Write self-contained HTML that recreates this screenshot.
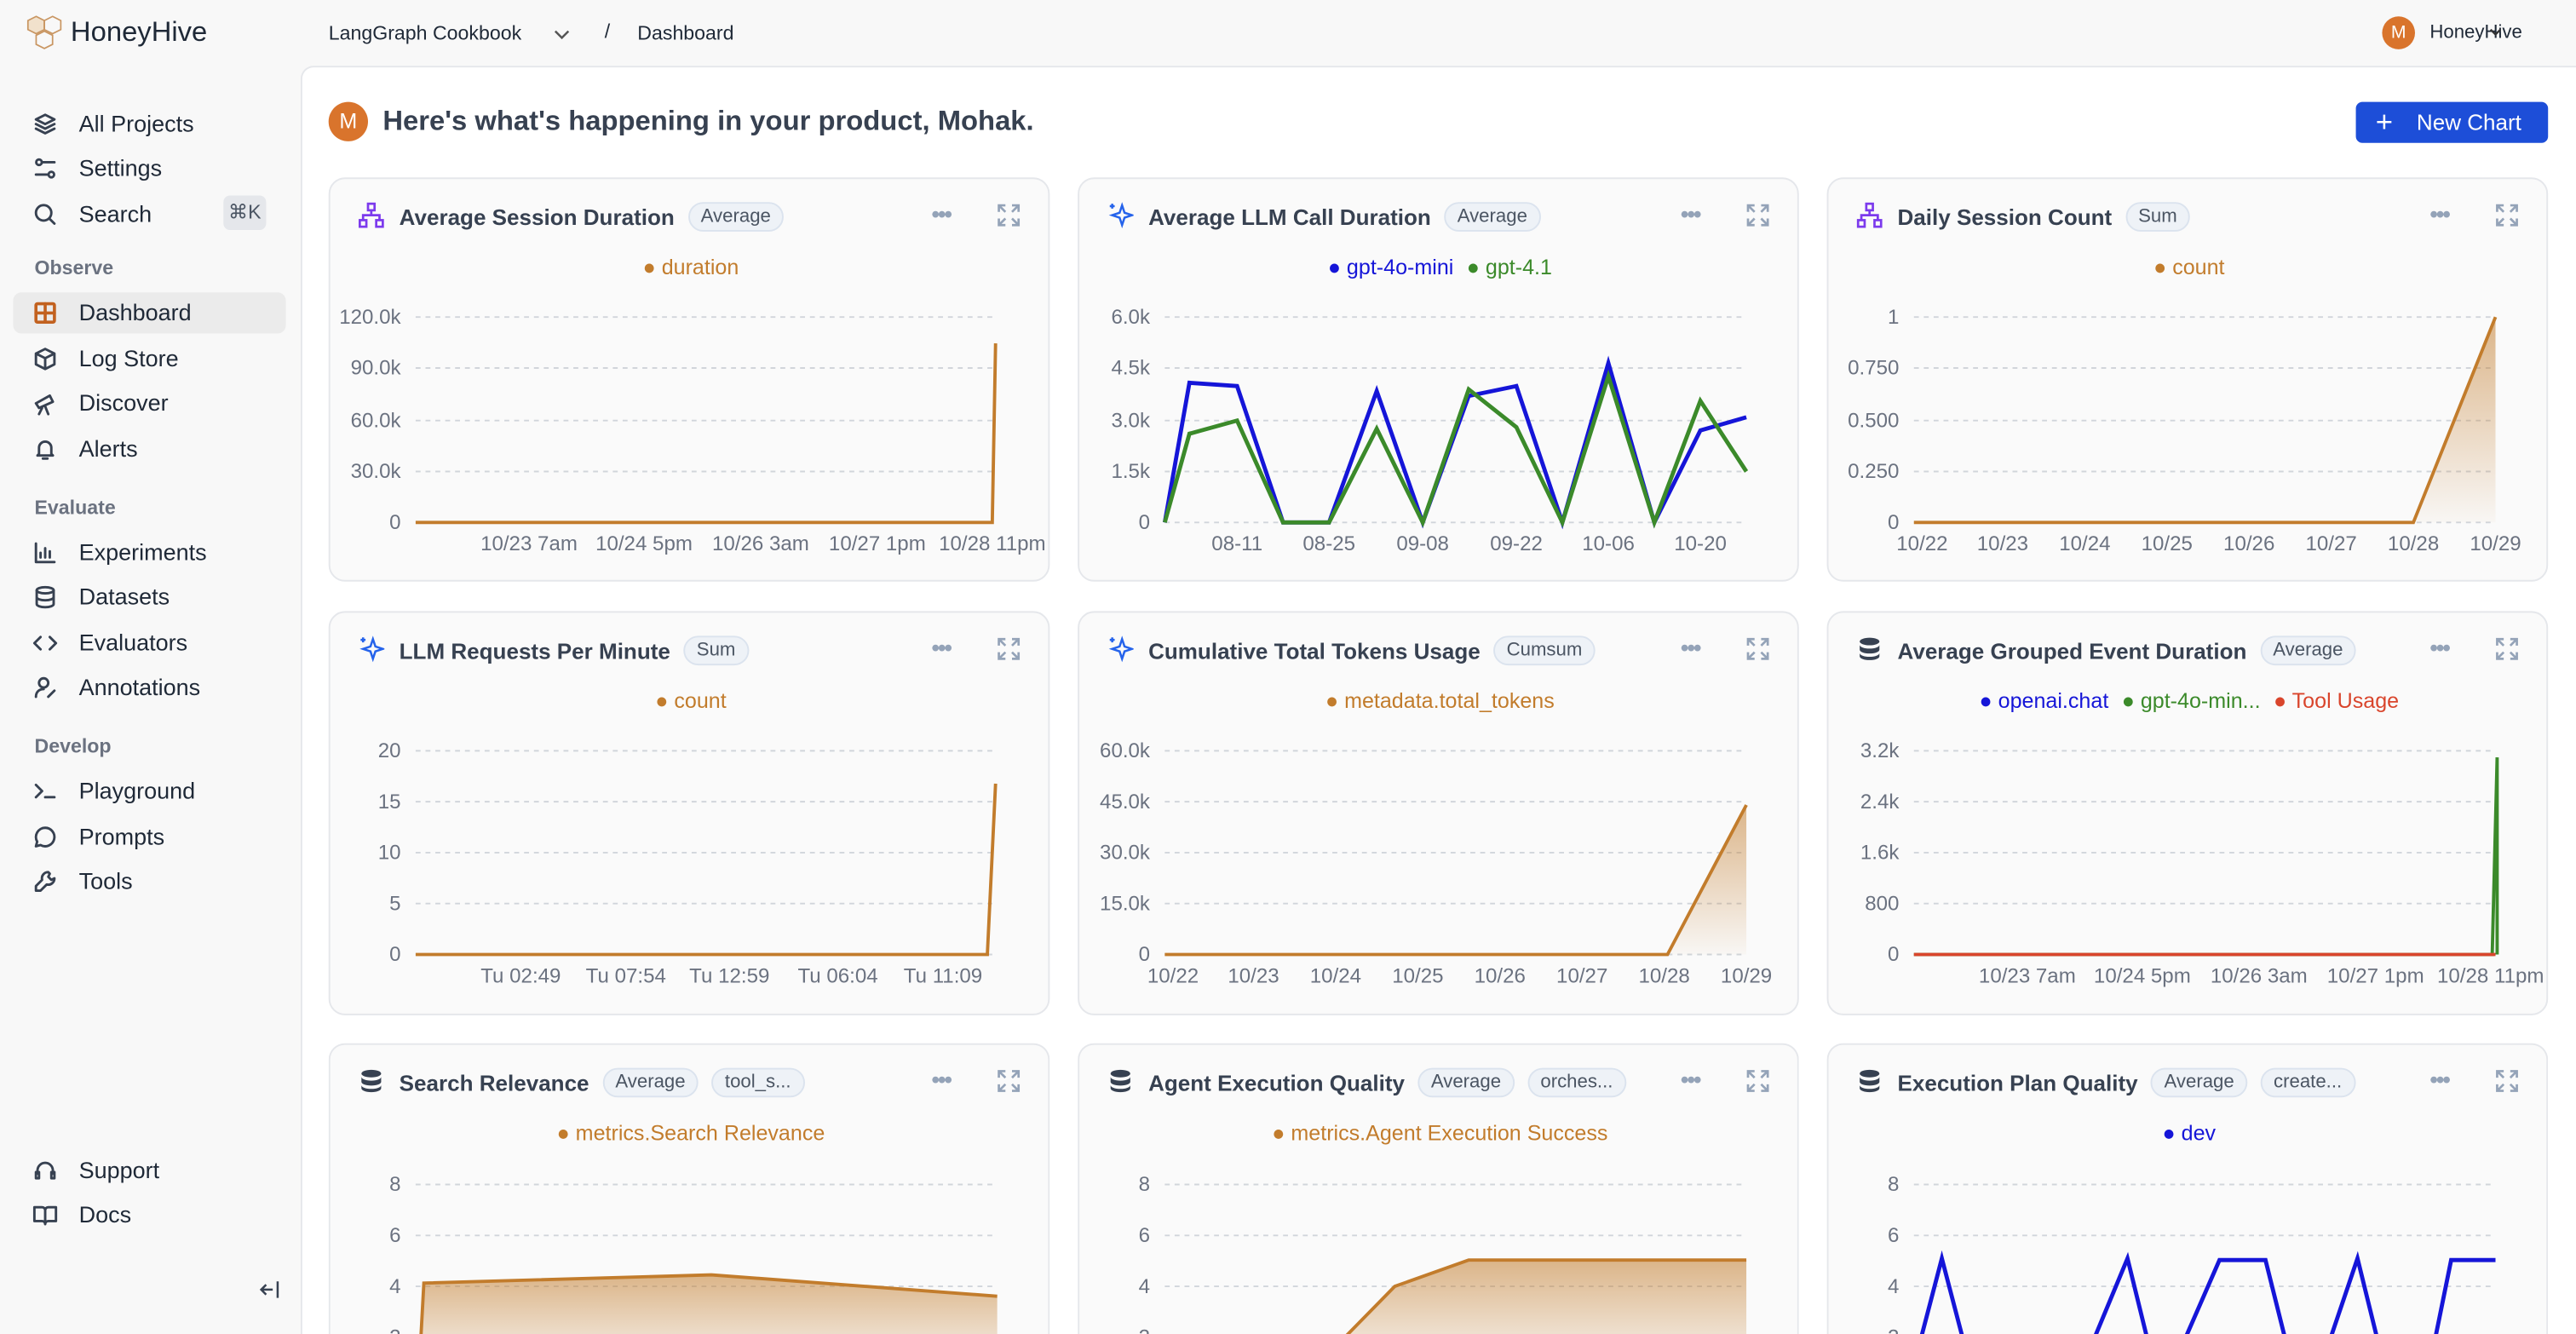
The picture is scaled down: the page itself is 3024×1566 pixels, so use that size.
<!DOCTYPE html>
<html><head><meta charset="utf-8"><style>
*{box-sizing:border-box;margin:0;padding:0}
html,body{width:3024px;height:1566px;overflow:hidden;background:#f8f8f8}
#w{position:absolute;left:0;top:0;width:1568px;height:812px;overflow:hidden;transform:scale(1.92857,1.92857);transform-origin:0 0;font-family:"Liberation Sans",sans-serif;color:#1f2937;background:#f8f8f8}
.a{position:absolute;white-space:nowrap}
.nav{position:absolute;left:20px;font-size:14px;color:#1f2937;display:flex;align-items:center}
.nav svg{width:15px;height:15px;margin-right:13px;fill:none;stroke:#374151;stroke-width:1.6;stroke-linecap:round;stroke-linejoin:round}
.sec{position:absolute;left:21px;font-size:12px;color:#6b7280;font-weight:bold}
#main{position:absolute;left:183px;top:40px;width:1385px;height:772px;background:#fff;border-left:1px solid #e5e7eb;border-top:1px solid #e5e7eb;border-top-left-radius:8px}
.card{position:absolute;width:439px;height:246px;background:#fafafa;border:1px solid #e5e7eb;border-radius:10px;overflow:hidden}
.card.r3{height:177px;border-bottom:none;border-bottom-left-radius:0;border-bottom-right-radius:0}
.card .t{position:absolute;left:42px;top:14px;font-size:13.5px;font-weight:bold;color:#374151;display:flex;align-items:center}
.pill{margin-left:8px;font-size:11.5px;font-weight:normal;color:#4b5563;background:#eef2f7;border:1px solid #dbe3ee;border-radius:9px;padding:2px 7px}
.ic{position:absolute;left:17px;top:14px;width:16px;height:16px}
.dots{position:absolute;left:366px;top:13px;font-size:14px;color:#94a3b8;letter-spacing:-1px;font-weight:bold}
.ex{position:absolute;left:405px;top:14px;width:16px;height:16px}
.card svg.c{position:absolute;left:0;top:0;width:439px;height:246px}
.c text{font-family:"Liberation Sans",sans-serif;font-size:12.5px;fill:#6b7280}
.c .g{stroke:#d1d5db;stroke-dasharray:3 3;stroke-width:1}
.lg{position:absolute;left:0;width:439px;top:46px;text-align:center;font-size:13px}
.lg span{margin:0 4px}
</style></head><body><div id="w">

<svg class="a" style="left:15px;top:9px" width="26" height="26" viewBox="0 0 26 26" fill="none" stroke="#c99662" stroke-width="0.9"><polygon points="7,1 12,3.5 12,9 7,11.5 2,9 2,3.5" fill="#f1e1cc"/><polygon points="17,1 22,3.5 22,9 17,11.5 12,9 12,3.5"/><polygon points="12,10 17,12.5 17,18 12,20.5 7,18 7,12.5"/></svg>
<div class="a" style="left:43px;top:10px;font-size:17px;color:#1f2937">HoneyHive</div>
<div class="a" style="left:200px;top:13px;font-size:12px;color:#1f2937">LangGraph Cookbook</div>
<svg class="a" style="left:336px;top:16px" width="12" height="10" viewBox="0 0 12 10"><path d="M2 3l4 4 4-4" stroke="#555" fill="none" stroke-width="1.3"/></svg>
<div class="a" style="left:368px;top:12px;font-size:12px;color:#1f2937">/</div>
<div class="a" style="left:388px;top:13px;font-size:12px;color:#1f2937">Dashboard</div>
<div class="a" style="left:1450px;top:10px;width:20px;height:20px;border-radius:50%;background:#d9742c;color:#fff;font-size:11px;text-align:center;line-height:20px">M</div>
<div class="a" style="left:1479px;top:14px;font-size:11.5px;color:#1f2937">HoneyHive</div>
<svg class="a" style="left:1514px;top:16px" width="10" height="8" viewBox="0 0 10 8"><path d="M2 2l3 3 3-3" stroke="#333" fill="none" stroke-width="1.2"/></svg>

<div class="nav" style="top:67px"><svg viewBox="0 0 16 16"><path d="M8 2l6 3-6 3-6-3z M2 8l6 3 6-3 M2 11l6 3 6-3"/></svg>All Projects</div>
<div class="nav" style="top:94px"><svg viewBox="0 0 16 16"><circle cx="4" cy="4" r="1.8"/><path d="M6 4h8 M2 12h8"/><circle cx="12" cy="12" r="1.8"/></svg>Settings</div>
<div class="nav" style="top:122px"><svg viewBox="0 0 16 16"><circle cx="7" cy="7" r="5"/><path d="M11 11l3 3"/></svg>Search</div>
<div class="a" style="left:136px;top:119px;width:26px;height:21px;background:#e5e7eb;border-radius:4px;font-size:12px;color:#4b5563;text-align:center;line-height:21px">⌘K</div>
<div class="sec" style="top:156px">Observe</div>
<div class="a" style="left:8px;top:178px;width:166px;height:25px;background:#ebebeb;border-radius:5px"></div>
<div class="nav" style="top:182px"><svg viewBox="0 0 16 16" style="stroke:#c2611f;stroke-width:2"><rect x="2" y="2" width="12" height="12" rx="1"/><path d="M8 2v12M2 8h12"/></svg>Dashboard</div>
<div class="nav" style="top:210px"><svg viewBox="0 0 16 16"><path d="M8 1.5l6 3v7l-6 3-6-3v-7z M2 4.5l6 3 6-3 M8 7.5v7"/></svg>Log Store</div>
<div class="nav" style="top:237px"><svg viewBox="0 0 16 16"><path d="M2 8l9-5 2 4-9 4z M6 11l-2 4 M8 10l2 5"/></svg>Discover</div>
<div class="nav" style="top:265px"><svg viewBox="0 0 16 16"><path d="M4 11V7a4 4 0 018 0v4l1 1H3z M6.5 14h3"/></svg>Alerts</div>
<div class="sec" style="top:302px">Evaluate</div>
<div class="nav" style="top:328px"><svg viewBox="0 0 16 16"><path d="M2 2v12h12 M5 11V8 M8 11V5 M11 11V7"/></svg>Experiments</div>
<div class="nav" style="top:355px"><svg viewBox="0 0 16 16"><ellipse cx="8" cy="3.5" rx="5.5" ry="2"/><path d="M2.5 3.5v9c0 1.1 2.5 2 5.5 2s5.5-.9 5.5-2v-9 M2.5 8c0 1.1 2.5 2 5.5 2s5.5-.9 5.5-2"/></svg>Datasets</div>
<div class="nav" style="top:383px"><svg viewBox="0 0 16 16"><path d="M5 4L1 8l4 4 M11 4l4 4-4 4"/></svg>Evaluators</div>
<div class="nav" style="top:410px"><svg viewBox="0 0 16 16"><circle cx="7" cy="5" r="3"/><path d="M2 14c0-3 2-5 5-5 M10 14l4-4"/></svg>Annotations</div>
<div class="sec" style="top:447px">Develop</div>
<div class="nav" style="top:473px"><svg viewBox="0 0 16 16"><path d="M2 4l4 4-4 4 M8 12h6"/></svg>Playground</div>
<div class="nav" style="top:501px"><svg viewBox="0 0 16 16"><path d="M8 2a6 6 0 00-5.2 9L2 14l3-.8A6 6 0 108 2z"/></svg>Prompts</div>
<div class="nav" style="top:528px"><svg viewBox="0 0 16 16"><path d="M10 2a4 4 0 00-4 5L2 11v3h3l4-4a4 4 0 005-4l-2 1-2-2 1-2z"/></svg>Tools</div>
<div class="nav" style="top:704px"><svg viewBox="0 0 16 16"><path d="M3 10V8a5 5 0 0110 0v2 M2 9h2v4H2z M12 9h2v4h-2z"/></svg>Support</div>
<div class="nav" style="top:731px"><svg viewBox="0 0 16 16"><path d="M1 3h5a2 2 0 012 2v9a2 2 0 00-2-2H1z M15 3h-5a2 2 0 00-2 2v9a2 2 0 012-2h5z"/></svg>Docs</div>
<svg class="a" style="left:157px;top:779px" width="14" height="12" viewBox="0 0 14 12"><path d="M12 1v10 M9 6H2 M5 3L2 6l3 3" stroke="#374151" fill="none" stroke-width="1.3"/></svg>

<div id="main"></div>
<div class="a" style="left:200px;top:62px;width:24px;height:24px;border-radius:50%;background:#d9742c;color:#fff;font-size:13px;text-align:center;line-height:24px">M</div>
<div class="a" style="left:233px;top:64px;font-size:17px;font-weight:bold;color:#374151">Here's what's happening in your product, Mohak.</div>
<div class="a" style="left:1434px;top:62px;width:117px;height:25px;background:#1d4ed8;border-radius:4px;color:#fff;font-size:13.5px;line-height:25px;padding-left:37px">New Chart</div>
<div class="a" style="left:1446px;top:62px;color:#fff;font-size:18px;line-height:25px">+</div>

<div class="card" style="left:200px;top:108px">
<svg class="ic" viewBox="0 0 16 16" fill="none" stroke="#7c3aed" stroke-width="1.4"><rect x="6" y="1" width="4" height="4"/><rect x="1" y="11" width="4" height="4"/><rect x="11" y="11" width="4" height="4"/><path d="M8 5v3M3 11V8h10v3"/></svg>
<div class="t">Average Session Duration<span class="pill">Average</span></div>
<div class="dots">•••</div><svg class="ex" viewBox="0 0 16 16" fill="none" stroke="#94a3b8" stroke-width="1.4"><path d="M2 6V2h4M2 2l4 4M10 2h4v4M14 2l-4 4M2 10v4h4M2 14l4-4M14 10v4h-4M14 14l-4-4"/></svg>
<div class="lg"><span style="color:#c27c2c">● duration</span></div>
<svg class="c"><g class="g"><line x1="52" y1="84" x2="406" y2="84"/><line x1="52" y1="115" x2="406" y2="115"/><line x1="52" y1="147" x2="406" y2="147"/><line x1="52" y1="178" x2="406" y2="178"/><line x1="52" y1="209" x2="406" y2="209"/></g>
<g text-anchor="end"><text x="43" y="88">120.0k</text><text x="43" y="119">90.0k</text><text x="43" y="151">60.0k</text><text x="43" y="182">30.0k</text><text x="43" y="213">0</text></g>
<polyline points="52,209 403,209 405,100" fill="none" stroke="#c27c2c" stroke-width="2"/>
<g text-anchor="middle"><text x="121" y="226">10/23 7am</text><text x="191" y="226">10/24 5pm</text><text x="262" y="226">10/26 3am</text><text x="333" y="226">10/27 1pm</text><text x="403" y="226">10/28 11pm</text></g></svg></div>

<div class="card" style="left:656px;top:108px">
<svg class="ic" viewBox="0 0 16 16" fill="none" stroke="#2563eb" stroke-width="1.3"><path d="M9 2l1.5 4.5L15 8l-4.5 1.5L9 14l-1.5-4.5L3 8l4.5-1.5z M3 1v3M1.5 2.5h3"/></svg>
<div class="t">Average LLM Call Duration<span class="pill">Average</span></div>
<div class="dots">•••</div><svg class="ex" viewBox="0 0 16 16" fill="none" stroke="#94a3b8" stroke-width="1.4"><path d="M2 6V2h4M2 2l4 4M10 2h4v4M14 2l-4 4M2 10v4h4M2 14l4-4M14 10v4h-4M14 14l-4-4"/></svg>
<div class="lg"><span style="color:#1515d8">● gpt-4o-mini</span><span style="color:#3b8a2a">● gpt-4.1</span></div>
<svg class="c"><g class="g"><line x1="52" y1="84" x2="406" y2="84"/><line x1="52" y1="115" x2="406" y2="115"/><line x1="52" y1="147" x2="406" y2="147"/><line x1="52" y1="178" x2="406" y2="178"/><line x1="52" y1="209" x2="406" y2="209"/></g>
<g text-anchor="end"><text x="43" y="88">6.0k</text><text x="43" y="119">4.5k</text><text x="43" y="151">3.0k</text><text x="43" y="182">1.5k</text><text x="43" y="213">0</text></g>
<polyline points="52,209 67,124 96,126 124,209 152,209 181,129 209,209 237,132 266,126 294,209 322,112 350,209 378,153 406,145" fill="none" stroke="#1515d8" stroke-width="2.5"/>
<polyline points="52,209 67,155 96,147 124,209 152,209 181,152 209,209 237,128 266,151 294,209 322,120 350,209 378,135 406,178" fill="none" stroke="#3b8a2a" stroke-width="2.5"/>
<g text-anchor="middle"><text x="96" y="226">08-11</text><text x="152" y="226">08-25</text><text x="209" y="226">09-08</text><text x="266" y="226">09-22</text><text x="322" y="226">10-06</text><text x="378" y="226">10-20</text></g></svg></div>

<div class="card" style="left:1112px;top:108px">
<svg class="ic" viewBox="0 0 16 16" fill="none" stroke="#7c3aed" stroke-width="1.4"><rect x="6" y="1" width="4" height="4"/><rect x="1" y="11" width="4" height="4"/><rect x="11" y="11" width="4" height="4"/><path d="M8 5v3M3 11V8h10v3"/></svg>
<div class="t">Daily Session Count<span class="pill">Sum</span></div>
<div class="dots">•••</div><svg class="ex" viewBox="0 0 16 16" fill="none" stroke="#94a3b8" stroke-width="1.4"><path d="M2 6V2h4M2 2l4 4M10 2h4v4M14 2l-4 4M2 10v4h4M2 14l4-4M14 10v4h-4M14 14l-4-4"/></svg>
<div class="lg"><span style="color:#c27c2c">● count</span></div>
<svg class="c"><defs><linearGradient id="gr" x1="0" y1="0" x2="0" y2="1"><stop offset="0" stop-color="#c27c2c" stop-opacity=".55"/><stop offset="1" stop-color="#c27c2c" stop-opacity=".03"/></linearGradient></defs><g class="g"><line x1="52" y1="84" x2="406" y2="84"/><line x1="52" y1="115" x2="406" y2="115"/><line x1="52" y1="147" x2="406" y2="147"/><line x1="52" y1="178" x2="406" y2="178"/><line x1="52" y1="209" x2="406" y2="209"/></g>
<g text-anchor="end"><text x="43" y="88">1</text><text x="43" y="119">0.750</text><text x="43" y="151">0.500</text><text x="43" y="182">0.250</text><text x="43" y="213">0</text></g>
<polygon points="356,209 406,84 406,209" fill="url(#gr)"/>
<polyline points="52,209 356,209 406,84" fill="none" stroke="#c27c2c" stroke-width="2"/>
<g text-anchor="middle"><text x="57" y="226">10/22</text><text x="106" y="226">10/23</text><text x="156" y="226">10/24</text><text x="206" y="226">10/25</text><text x="256" y="226">10/26</text><text x="306" y="226">10/27</text><text x="356" y="226">10/28</text><text x="406" y="226">10/29</text></g></svg></div>

<div class="card" style="left:200px;top:372px">
<svg class="ic" viewBox="0 0 16 16" fill="none" stroke="#2563eb" stroke-width="1.3"><path d="M9 2l1.5 4.5L15 8l-4.5 1.5L9 14l-1.5-4.5L3 8l4.5-1.5z M3 1v3M1.5 2.5h3"/></svg>
<div class="t">LLM Requests Per Minute<span class="pill">Sum</span></div>
<div class="dots">•••</div><svg class="ex" viewBox="0 0 16 16" fill="none" stroke="#94a3b8" stroke-width="1.4"><path d="M2 6V2h4M2 2l4 4M10 2h4v4M14 2l-4 4M2 10v4h4M2 14l4-4M14 10v4h-4M14 14l-4-4"/></svg>
<div class="lg"><span style="color:#c27c2c">● count</span></div>
<svg class="c"><g class="g"><line x1="52" y1="84" x2="406" y2="84"/><line x1="52" y1="115" x2="406" y2="115"/><line x1="52" y1="146" x2="406" y2="146"/><line x1="52" y1="177" x2="406" y2="177"/><line x1="52" y1="208" x2="406" y2="208"/></g>
<g text-anchor="end"><text x="43" y="88">20</text><text x="43" y="119">15</text><text x="43" y="150">10</text><text x="43" y="181">5</text><text x="43" y="212">0</text></g>
<polyline points="52,208 400,208 405,104" fill="none" stroke="#c27c2c" stroke-width="2"/>
<g text-anchor="middle"><text x="116" y="225">Tu 02:49</text><text x="180" y="225">Tu 07:54</text><text x="243" y="225">Tu 12:59</text><text x="309" y="225">Tu 06:04</text><text x="373" y="225">Tu 11:09</text></g></svg></div>

<div class="card" style="left:656px;top:372px">
<svg class="ic" viewBox="0 0 16 16" fill="none" stroke="#2563eb" stroke-width="1.3"><path d="M9 2l1.5 4.5L15 8l-4.5 1.5L9 14l-1.5-4.5L3 8l4.5-1.5z M3 1v3M1.5 2.5h3"/></svg>
<div class="t">Cumulative Total Tokens Usage<span class="pill">Cumsum</span></div>
<div class="dots">•••</div><svg class="ex" viewBox="0 0 16 16" fill="none" stroke="#94a3b8" stroke-width="1.4"><path d="M2 6V2h4M2 2l4 4M10 2h4v4M14 2l-4 4M2 10v4h4M2 14l4-4M14 10v4h-4M14 14l-4-4"/></svg>
<div class="lg"><span style="color:#c27c2c">● metadata.total_tokens</span></div>
<svg class="c"><g class="g"><line x1="52" y1="84" x2="406" y2="84"/><line x1="52" y1="115" x2="406" y2="115"/><line x1="52" y1="146" x2="406" y2="146"/><line x1="52" y1="177" x2="406" y2="177"/><line x1="52" y1="208" x2="406" y2="208"/></g>
<g text-anchor="end"><text x="43" y="88">60.0k</text><text x="43" y="119">45.0k</text><text x="43" y="150">30.0k</text><text x="43" y="181">15.0k</text><text x="43" y="212">0</text></g>
<polygon points="358,208 406,117 406,208" fill="url(#gr)"/>
<polyline points="52,208 358,208 406,117" fill="none" stroke="#c27c2c" stroke-width="2"/>
<g text-anchor="middle"><text x="57" y="225">10/22</text><text x="106" y="225">10/23</text><text x="156" y="225">10/24</text><text x="206" y="225">10/25</text><text x="256" y="225">10/26</text><text x="306" y="225">10/27</text><text x="356" y="225">10/28</text><text x="406" y="225">10/29</text></g></svg></div>

<div class="card" style="left:1112px;top:372px">
<svg class="ic" viewBox="0 0 16 16" fill="#374151"><ellipse cx="8" cy="3.5" rx="6" ry="2.3"/><path d="M2 5.5c0 1.3 2.7 2.3 6 2.3s6-1 6-2.3v3c0 1.3-2.7 2.3-6 2.3s-6-1-6-2.3z M2 10.5c0 1.3 2.7 2.3 6 2.3s6-1 6-2.3v2c0 1.3-2.7 2.3-6 2.3s-6-1-6-2.3z"/></svg>
<div class="t">Average Grouped Event Duration<span class="pill">Average</span></div>
<div class="dots">•••</div><svg class="ex" viewBox="0 0 16 16" fill="none" stroke="#94a3b8" stroke-width="1.4"><path d="M2 6V2h4M2 2l4 4M10 2h4v4M14 2l-4 4M2 10v4h4M2 14l4-4M14 10v4h-4M14 14l-4-4"/></svg>
<div class="lg"><span style="color:#1515d8">● openai.chat</span><span style="color:#3b8a2a">● gpt-4o-min...</span><span style="color:#d9452c">● Tool Usage</span></div>
<svg class="c"><g class="g"><line x1="52" y1="84" x2="406" y2="84"/><line x1="52" y1="115" x2="406" y2="115"/><line x1="52" y1="146" x2="406" y2="146"/><line x1="52" y1="177" x2="406" y2="177"/><line x1="52" y1="208" x2="406" y2="208"/></g>
<g text-anchor="end"><text x="43" y="88">3.2k</text><text x="43" y="119">2.4k</text><text x="43" y="150">1.6k</text><text x="43" y="181">800</text><text x="43" y="212">0</text></g>
<polyline points="52,208 404,208 407,88 407,208" fill="none" stroke="#3b8a2a" stroke-width="2"/>
<polyline points="52,208 406,208" fill="none" stroke="#d9452c" stroke-width="2"/>
<g text-anchor="middle"><text x="121" y="225">10/23 7am</text><text x="191" y="225">10/24 5pm</text><text x="262" y="225">10/26 3am</text><text x="333" y="225">10/27 1pm</text><text x="403" y="225">10/28 11pm</text></g></svg></div>

<div class="card r3" style="left:200px;top:635px">
<svg class="ic" viewBox="0 0 16 16" fill="#374151"><ellipse cx="8" cy="3.5" rx="6" ry="2.3"/><path d="M2 5.5c0 1.3 2.7 2.3 6 2.3s6-1 6-2.3v3c0 1.3-2.7 2.3-6 2.3s-6-1-6-2.3z M2 10.5c0 1.3 2.7 2.3 6 2.3s6-1 6-2.3v2c0 1.3-2.7 2.3-6 2.3s-6-1-6-2.3z"/></svg>
<div class="t">Search Relevance<span class="pill">Average</span><span class="pill">tool_s...</span></div>
<div class="dots">•••</div><svg class="ex" viewBox="0 0 16 16" fill="none" stroke="#94a3b8" stroke-width="1.4"><path d="M2 6V2h4M2 2l4 4M10 2h4v4M14 2l-4 4M2 10v4h4M2 14l4-4M14 10v4h-4M14 14l-4-4"/></svg>
<div class="lg"><span style="color:#c27c2c">● metrics.Search Relevance</span></div>
<svg class="c"><g class="g"><line x1="52" y1="85" x2="406" y2="85"/><line x1="52" y1="116" x2="406" y2="116"/><line x1="52" y1="147" x2="406" y2="147"/><line x1="52" y1="178" x2="406" y2="178"/></g>
<g text-anchor="end"><text x="43" y="89">8</text><text x="43" y="120">6</text><text x="43" y="151">4</text><text x="43" y="182">2</text></g>
<polygon points="54,200 57,145 232,140 406,153 406,200" fill="url(#gr)"/>
<polyline points="54,200 57,145 232,140 406,153" fill="none" stroke="#c27c2c" stroke-width="2"/></svg></div>

<div class="card r3" style="left:656px;top:635px">
<svg class="ic" viewBox="0 0 16 16" fill="#374151"><ellipse cx="8" cy="3.5" rx="6" ry="2.3"/><path d="M2 5.5c0 1.3 2.7 2.3 6 2.3s6-1 6-2.3v3c0 1.3-2.7 2.3-6 2.3s-6-1-6-2.3z M2 10.5c0 1.3 2.7 2.3 6 2.3s6-1 6-2.3v2c0 1.3-2.7 2.3-6 2.3s-6-1-6-2.3z"/></svg>
<div class="t">Agent Execution Quality<span class="pill">Average</span><span class="pill">orches...</span></div>
<div class="dots">•••</div><svg class="ex" viewBox="0 0 16 16" fill="none" stroke="#94a3b8" stroke-width="1.4"><path d="M2 6V2h4M2 2l4 4M10 2h4v4M14 2l-4 4M2 10v4h4M2 14l4-4M14 10v4h-4M14 14l-4-4"/></svg>
<div class="lg"><span style="color:#c27c2c">● metrics.Agent Execution Success</span></div>
<svg class="c"><g class="g"><line x1="52" y1="85" x2="406" y2="85"/><line x1="52" y1="116" x2="406" y2="116"/><line x1="52" y1="147" x2="406" y2="147"/><line x1="52" y1="178" x2="406" y2="178"/></g>
<g text-anchor="end"><text x="43" y="89">8</text><text x="43" y="120">6</text><text x="43" y="151">4</text><text x="43" y="182">2</text></g>
<polygon points="140,200 192,147 237,131 406,131 406,200" fill="url(#gr)"/>
<polyline points="140,200 192,147 237,131 406,131" fill="none" stroke="#c27c2c" stroke-width="2"/></svg></div>

<div class="card r3" style="left:1112px;top:635px">
<svg class="ic" viewBox="0 0 16 16" fill="#374151"><ellipse cx="8" cy="3.5" rx="6" ry="2.3"/><path d="M2 5.5c0 1.3 2.7 2.3 6 2.3s6-1 6-2.3v3c0 1.3-2.7 2.3-6 2.3s-6-1-6-2.3z M2 10.5c0 1.3 2.7 2.3 6 2.3s6-1 6-2.3v2c0 1.3-2.7 2.3-6 2.3s-6-1-6-2.3z"/></svg>
<div class="t">Execution Plan Quality<span class="pill">Average</span><span class="pill">create...</span></div>
<div class="dots">•••</div><svg class="ex" viewBox="0 0 16 16" fill="none" stroke="#94a3b8" stroke-width="1.4"><path d="M2 6V2h4M2 2l4 4M10 2h4v4M14 2l-4 4M2 10v4h4M2 14l4-4M14 10v4h-4M14 14l-4-4"/></svg>
<div class="lg"><span style="color:#1515d8">● dev</span></div>
<svg class="c"><g class="g"><line x1="52" y1="85" x2="406" y2="85"/><line x1="52" y1="116" x2="406" y2="116"/><line x1="52" y1="147" x2="406" y2="147"/><line x1="52" y1="178" x2="406" y2="178"/></g>
<g text-anchor="end"><text x="43" y="89">8</text><text x="43" y="120">6</text><text x="43" y="151">4</text><text x="43" y="182">2</text></g>
<polyline points="52,195 69,130 86,195 155,195 182,130 198,195 210,195 238,131 266,131 282,195 300,195 322,130 338,195 366,195 379,131 406,131" fill="none" stroke="#1515d8" stroke-width="2.5"/></svg></div>

</div></body></html>
